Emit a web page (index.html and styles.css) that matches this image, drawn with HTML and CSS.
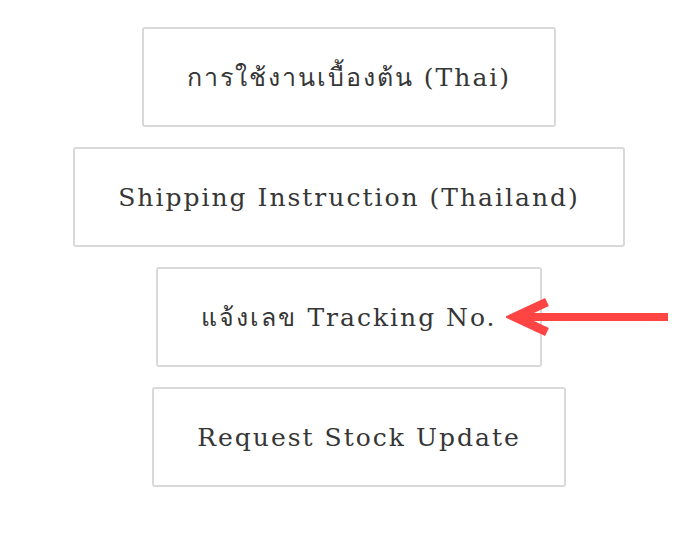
FILE: index.html
```html
<!DOCTYPE html>
<html lang="th">
<head>
    <meta charset="UTF-8">
    <title>Links</title>
    <link rel="stylesheet" href="styles.css">
</head>
<body>
<div class="link-list">

    <!-- guide -->
    <a href="#" class="link-box">การใช้งานเบื้องต้น (Thai)</a>

    <a href="#" class="link-box">Shipping Instruction (Thailand)</a>

    <!-- tracking with arrow -->
    <div class="link-row">
        <a href="#" class="link-box">แจ้งเลข Tracking No.</a>
        <svg class="arrow" width="162" height="44" viewBox="0 0 162 44">
            <line x1="10" y1="22" x2="162" y2="22" stroke="#ff4444" stroke-width="8"/>
            <polyline points="41,7 9,22 41,37" fill="none" stroke="#ff4444" stroke-width="9"/>
        </svg>
    </div>

    <a href="#" class="link-box shift">Request Stock Update</a>
</div>
</body>
</html>
```

FILE: styles.css
```css
body {
    margin: 0;
    background-color: #fff;
}

.link-list {
    display: flex;
    flex-direction: column;
    align-items: center;
    gap: 20px;
    padding-top: 27px;
}

.link-box {
    display: block;
    box-sizing: border-box;
    height: 100px;
    line-height: 98px;
    padding: 0 43px;
    border: 2px solid #d9d9d9;
    border-radius: 3px;
    color: #363636;
    text-decoration: none;
    font-family: "DejaVu Serif", "Liberation Serif", serif;
    font-size: 25px;
    letter-spacing: 2px;
    white-space: nowrap;
}

.link-row {
    position: relative;
}

.link-row .arrow {
    position: absolute;
    left: 100%;
    top: 28px;
    margin-left: -36px;
}

.shift {
    margin-left: 20px;
}
```
